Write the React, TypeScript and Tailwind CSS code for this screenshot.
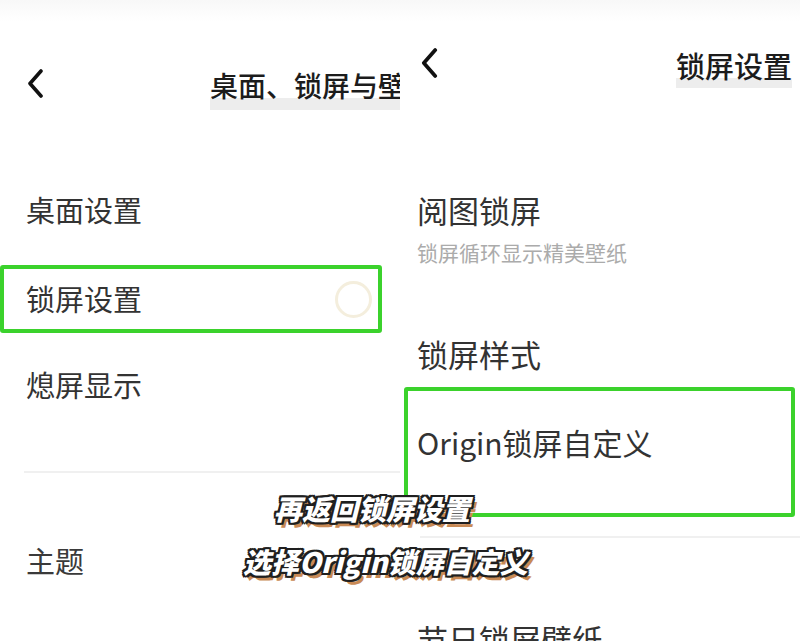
import React from 'react';

const font = "font-['Noto_Sans_CJK_SC','Noto_Sans',sans-serif]";

function Chevron({ className }: { className: string }) {
  return (
    <svg className={className} viewBox="0 0 16 29" fill="none">
      <polyline points="14,2 3,14.5 14,27" stroke="#111" strokeWidth="3.6" strokeLinecap="round" strokeLinejoin="round" />
    </svg>
  );
}

export default function App() {
  return (
    <div className={`relative w-[800px] h-[641px] overflow-hidden bg-white ${font}`}>
      <div className="flex h-full">
        {/* 左侧：桌面、锁屏与壁纸 */}
        <div className="w-[400px] h-full overflow-hidden flex flex-col">
          <div className="h-[166px] shrink-0 flex items-center bg-[linear-gradient(to_bottom,#f8f8f8,#ffffff_22px)]">
            <Chevron className="ml-[27px] w-[16px] h-[29px] shrink-0" />
            <span className="ml-[167px] mt-[10px] whitespace-nowrap text-[28px] leading-[38px] font-medium text-[#1c1c1c] pb-[6px] bg-[linear-gradient(to_bottom,transparent_72%,#ededed_72%)]">
              桌面、锁屏与壁纸
            </span>
          </div>
          <div className="h-[88px] shrink-0 flex items-center pl-[26px] text-[29px] text-[#333]">桌面设置</div>
          <div className="mt-[11px] h-[68px] w-[382px] shrink-0 border-[4px] border-[#3bd22c] rounded-[3px] flex items-center justify-between pl-[22px] pr-[6px] text-[29px] text-[#333]">
            <span>锁屏设置</span>
            <span className="w-[37px] h-[37px] rounded-full border-[3px] border-[#f4eedd]" />
          </div>
          <div className="h-[104px] shrink-0 flex items-center pl-[26px] text-[29px] text-[#333]">熄屏显示</div>
          <div className="mt-[34px] ml-[24px] h-[2px] shrink-0 bg-[#f0f0f0]" />
          <div className="h-[176px] shrink-0 flex items-center pl-[26px] text-[29px] text-[#3a3a3a]">主题</div>
          <div className="pl-[26px] text-[29px] leading-[36px] text-[#3a3a3a]">壁纸</div>
        </div>

        {/* 右侧：锁屏设置 */}
        <div className="w-[400px] h-full overflow-hidden flex flex-col">
          <div className="h-[126px] shrink-0 flex items-center justify-between bg-[linear-gradient(to_bottom,#f8f8f8,#ffffff_22px)]">
            <Chevron className="ml-[20px] w-[18px] h-[30px] shrink-0" />
            <span className="mr-[8px] mt-[8px] whitespace-nowrap text-[29px] leading-[38px] font-medium text-[#1c1c1c] pb-[4px] bg-[linear-gradient(to_bottom,transparent_76%,#ededed_76%)]">
              锁屏设置
            </span>
          </div>
          <div className="mt-[66px] pl-[17px] shrink-0">
            <div className="text-[31px] leading-[36px] text-[#333]">阅图锁屏</div>
            <div className="mt-[11px] text-[21px] leading-[26px] text-[#ababab]">锁屏循环显示精美壁纸</div>
          </div>
          <div className="mt-[71px] pl-[17px] text-[31px] leading-[36px] text-[#333] shrink-0">锁屏样式</div>
          <div className="mt-[15px] ml-[4px] w-[391px] h-[130px] shrink-0 border-[4px] border-[#3bd22c] rounded-[3px] pl-[9px] pt-[33px]">
            <div className="text-[30px] leading-[36px] text-[#333]">Origin锁屏自定义</div>
          </div>
          <div className="mt-[19px] ml-[20px] h-[2px] shrink-0 bg-[#f0f0f0]" />
          <div className="mt-[83px] pl-[17px] text-[31px] leading-[36px] text-[#333] whitespace-nowrap">节日锁屏壁纸</div>
        </div>
      </div>

      {/* 字幕 */}
      <div className="absolute left-0 top-[482px] flex flex-col items-start italic font-black text-white text-[28px] leading-[53px] whitespace-nowrap [text-shadow:-2px_-2px_0_#1f1f1f,2px_-2px_0_#1f1f1f,-2px_2px_0_#1f1f1f,2px_2px_0_#1f1f1f,0_2px_0_#1f1f1f,0_-2px_0_#1f1f1f,2px_0_0_#1f1f1f,-2px_0_0_#1f1f1f,4px_5px_0_#c98a55]">
        <div className="ml-[274px]">再返回锁屏设置</div>
        <div className="ml-[243px]">选择Origin锁屏自定义</div>
      </div>
    </div>
  );
}
